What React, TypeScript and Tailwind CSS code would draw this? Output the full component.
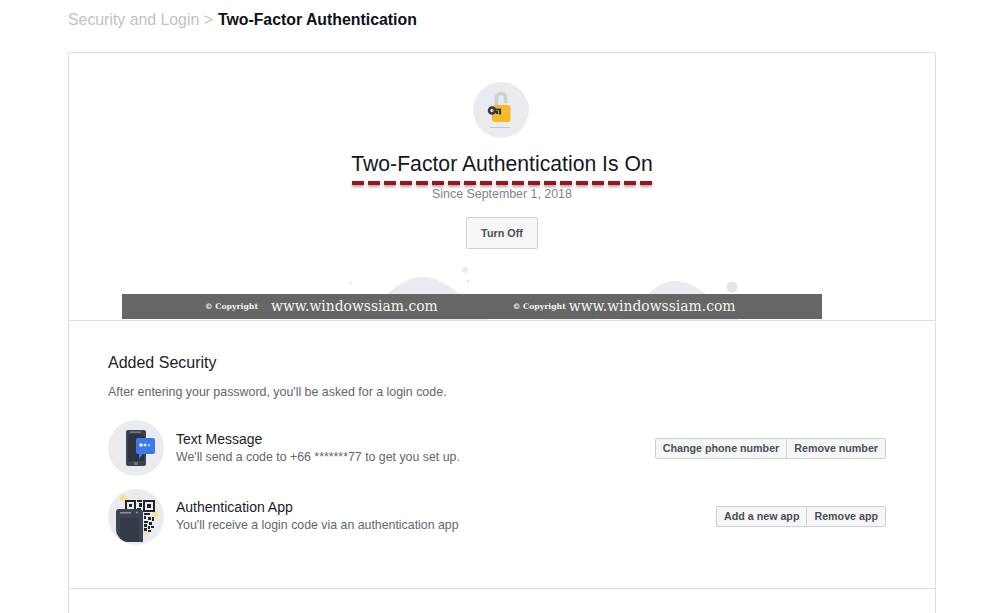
const sans = { fontFamily: '"Liberation Sans", Arial, sans-serif' };

function LockIcon() {
  return (
    <svg className="mr-[2px]" width="56" height="56" viewBox="0 0 56 56">
      <circle cx="28" cy="28" r="28" fill="#e9ebee" />
      <path d="M23.500 24 V16 a4.500 4.500 0 0 1 9 0 v5" fill="none" stroke="#cdd0d5" strokeWidth="3.600" />
      <path d="M21 23 h14 a2.500 2.500 0 0 1 2.500 2.500 v12 a2.500 2.500 0 0 1 -2.500 2.500 h-13 a3 3 0 0 1 -3 -3 v-12 z" fill="#f7b928" />
      <circle cx="19" cy="28.500" r="3" fill="none" stroke="#2f3a52" strokeWidth="2.600" />
      <path d="M21 27.500 h6 v5 M24 29 v3" fill="none" stroke="#2f3a52" strokeWidth="2.200" />
      <rect x="17" y="45" width="20" height="1" fill="#c4c7cc" />
    </svg>
  );
}

function PhoneIcon() {
  return (
    <svg width="56" height="56" viewBox="0 0 56 56">
      <circle cx="28" cy="28" r="28" fill="#e9ebee" />
      <rect x="18" y="10" width="20" height="36" rx="2" fill="#3a4350" />
      <rect x="20" y="14" width="16" height="27" fill="#2d3440" />
      <rect x="22" y="11.500" width="11" height="1.300" fill="#7d8590" />
      <rect x="26" y="42" width="4" height="3" rx="1" fill="#6c7480" />
      <path d="M30 18 h15 a2 2 0 0 1 2 2 v12 a2 2 0 0 1 -2 2 h-10 l-4 5 v-5 h-1 a2 2 0 0 1 -2 -2 v-12 a2 2 0 0 1 2 -2 z" fill="#3b7be8" />
      <circle cx="33" cy="25" r="1.700" fill="#fff" />
      <circle cx="37" cy="25" r="1.500" fill="#d5e3fb" />
      <circle cx="41" cy="25" r="1.500" fill="#8fb4f3" />
    </svg>
  );
}

function QrIcon() {
  return (
    <svg className="translate-y-px" width="56" height="56" viewBox="0 0 56 56">
      <circle cx="28" cy="28" r="28" fill="#e9ebee" />
      <circle cx="15" cy="9" r="3.500" fill="#fbe08f" />
      <circle cx="47" cy="25" r="3" fill="#fbe08f" />
      <circle cx="37" cy="44" r="2" fill="#fbe08f" />
      <g fill="none" stroke="#20252d" strokeWidth="2">
        <rect x="18" y="12" width="9" height="9" />
        <rect x="36" y="12" width="10" height="10" />
      </g>
      <g fill="#20252d">
        <rect x="21" y="15" width="3" height="3" />
        <rect x="39" y="15" width="4" height="4" />
        <rect x="29" y="11" width="5" height="2" />
        <rect x="31" y="14" width="3" height="4" />
        <rect x="29" y="19" width="4" height="2" />
        <rect x="36" y="24" width="6" height="2" />
        <rect x="36" y="27" width="2" height="3" />
        <rect x="40" y="28" width="3" height="3" />
        <rect x="44" y="28" width="2" height="4" />
        <rect x="36" y="32" width="4" height="2" />
        <rect x="41" y="33" width="3" height="3" />
        <rect x="36" y="35" width="3" height="3" />
        <rect x="40" y="37" width="2" height="3" />
        <rect x="43" y="37" width="3" height="2" />
        <rect x="36" y="39" width="3" height="3" />
        <rect x="40" y="41" width="3" height="2" />
      </g>
      <path d="M8 23 a3 3 0 0 1 3 -3 h20 a4 4 0 0 1 4 4 v29 h-14 a13 13 0 0 1 -13 -13 z" fill="#3a4350" />
      <rect x="12" y="23" width="11" height="1.500" fill="#8a919c" />
      <circle cx="29" cy="23.500" r="1" fill="#8a919c" />
      <path d="M12 29 h19 v24 h-11 a8 8 0 0 1 -8 -8 z" fill="#333b47" />
    </svg>
  );
}

function Hills() {
  return (
    <svg className="absolute left-0 top-[210px]" width="866" height="57" viewBox="0 0 866 57">
      <path d="M290 57 C312 38 330 14 354 14 C378 14 396 38 420 57 Z" fill="#e9ebee" />
      <path d="M550 57 C575 36 588 18 606 18 C626 18 645 38 670 57 Z" fill="#e9ebee" />
      <path d="M475 57 C485 30 512 24 525 57 Z" fill="#eceef1" />
      <circle cx="396" cy="7" r="3" fill="#e9ebee" />
      <circle cx="399" cy="18" r="1.500" fill="#e9ebee" />
      <circle cx="282" cy="20" r="1.500" fill="#e9ebee" />
      <circle cx="663" cy="24" r="5.500" fill="#e3e5e9" />
    </svg>
  );
}

function Watermark() {
  return (
    <div
      className="absolute left-[122px] top-[294px] flex h-[25px] w-[700px] items-center bg-[#666666] text-[#f4f4f4]"
      style={{ fontFamily: '"DejaVu Serif", serif' }}
    >
      <span className="ml-[83px] w-[66px] text-[7.700px] font-bold leading-none">© Copyright</span>
      <span className="text-[13.900px] leading-none">www.windowssiam.com</span>
      <span className="ml-[75px] w-[56px] text-[7.700px] font-bold leading-none">© Copyright</span>
      <span className="text-[13.900px] leading-none">www.windowssiam.com</span>
    </div>
  );
}

function Underline() {
  return (
    <div className="absolute left-[352px] top-[181px] flex gap-[4px]">
      {Array.from({ length: 19 }).map((_, i) => (
        <div key={i} className="h-[4px] w-[12px] bg-[#a01020] shadow-[0_2px_3px_rgba(0,0,0,0.35)]" />
      ))}
    </div>
  );
}

function SmallButton({ children, className }: { children: string; className: string }) {
  return (
    <button className={`h-[21px] border border-[#ced0d4] bg-[#f5f6f7] px-[7px] text-[10.700px] font-bold leading-none text-[#4b4f56] ${className}`}>
      {children}
    </button>
  );
}

function MethodRow({
  icon,
  title,
  text,
  buttons,
  className,
}: {
  icon: React.ReactNode;
  title: string;
  text: string;
  buttons: string[];
  className: string;
}) {
  return (
    <div className={`flex items-center ${className}`}>
      {icon}
      <div className="ml-[12px] flex-1">
        <div className="text-[14px] leading-[18px] text-[#1d2129]">{title}</div>
        <div className="text-[12.350px] leading-[18px] text-[#616770]">{text}</div>
      </div>
      <div className="flex">
        <SmallButton className="rounded-l-[2px]">{buttons[0]}</SmallButton>
        <SmallButton className="-ml-px rounded-r-[2px]">{buttons[1]}</SmallButton>
      </div>
    </div>
  );
}

export default function App() {
  return (
    <div className="relative h-[613px] w-[1000px] overflow-hidden bg-white" style={sans}>
      {/* Breadcrumb */}
      <div className="flex h-[52px] items-start pl-[68px] pt-[10px] text-[15.850px] leading-[19px]">
        <span className="text-[#bec2c9]">Security and Login &gt;</span>
        <span className="ml-[5px] font-bold text-[#0d1117]">Two-Factor Authentication</span>
      </div>

      <div className="ml-[68px] h-[600px] w-[868px] rounded-t-[2px] border border-[#dddfe2]">
        {/* Status */}
        <div className="relative flex h-[268px] flex-col items-center border-b border-[#dddfe2] pt-[29px]">
          <Hills />
          <div className="relative flex flex-col items-center">
            <LockIcon />
            <h1 className="mt-[12px] text-[21.200px] font-normal leading-[28px] text-[#14171f]">
              Two-Factor Authentication Is On
            </h1>
            <div className="mt-[9px] text-[12.400px] leading-[15px] text-[#7f848c]">Since September 1, 2018</div>
            <button className="mt-[15px] h-[32px] w-[72px] rounded-[2px] border border-[#ced0d4] bg-[#f6f7f9] text-[10.800px] font-bold text-[#4b4f56]">
              Turn Off
            </button>
          </div>
        </div>

        {/* Added security */}
        <div className="h-[268px] border-b border-[#dddfe2] pl-[39px] pr-[49px] pt-[32px]">
          <h2 className="text-[16px] font-normal leading-[20px] text-[#1d2129]">Added Security</h2>
          <p className="mt-[11px] text-[12.400px] leading-[16px] text-[#616770]">
            After entering your password, you'll be asked for a login code.
          </p>
          <MethodRow
            className="mt-[20px]"
            icon={<PhoneIcon />}
            title="Text Message"
            text="We'll send a code to +66 *******77 to get you set up."
            buttons={["Change phone number", "Remove number"]}
          />
          <MethodRow
            className="mt-[12px]"
            icon={<QrIcon />}
            title="Authentication App"
            text="You'll receive a login code via an authentication app"
            buttons={["Add a new app", "Remove app"]}
          />
        </div>
      </div>

      <Underline />
      <Watermark />
    </div>
  );
}
